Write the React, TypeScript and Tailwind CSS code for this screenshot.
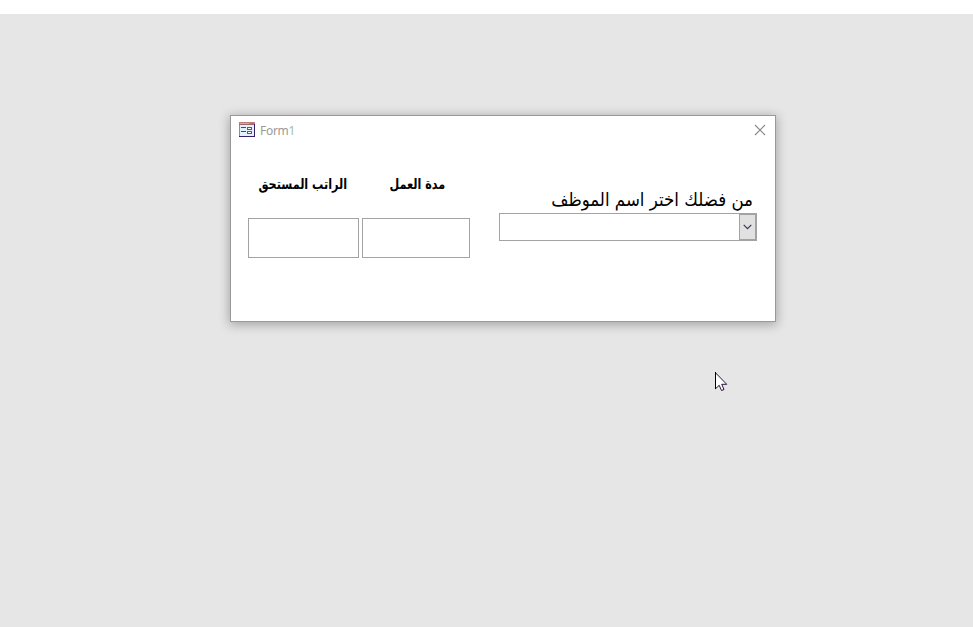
import { useState } from "react";

function FormIcon() {
  return (
    <svg className="mb-px" width="16" height="15" viewBox="0 0 16 15" shapeRendering="crispEdges">
      <rect width="16" height="15" fill="#8f88b0" />
      <rect x="1" y="3" width="14" height="11" fill="#e3f1f8" />
      <rect x="0" y="0" width="16" height="3" fill="#bd8078" />
      <rect x="1" y="1" width="9" height="1" fill="#d4aaa0" />
      <rect x="12" y="1" width="2" height="1" fill="#c96a48" />
      <rect x="0" y="2" width="16" height="1" fill="#a0686c" />
      <rect x="15" y="2" width="1" height="13" fill="#35206a" />
      <rect x="0" y="14" width="16" height="1" fill="#35206a" />
      <rect x="2" y="5" width="5" height="1" fill="#31517f" />
      <rect x="2" y="9" width="5" height="1" fill="#31517f" />
      <path d="M8.5 5.5h4v2h-4zM8.5 9.5h4v2h-4z" fill="#fff" stroke="#3c6794" />
    </svg>
  );
}

function Cursor() {
  return (
    <svg className="absolute left-[715px] top-[372px]" width="13" height="20" viewBox="0 0 13 20">
      <path d="M.5.8v15.9l3.7-3.4 2.3 5.2 2.5-1-2.3-5.2h5z" fill="#fff" stroke="#2c1238" />
      <path d="M.5 0v17" stroke="#000" />
    </svg>
  );
}

export default function App() {
  const [duration, setDuration] = useState("");
  const [salary, setSalary] = useState("");

  return (
    <div className="relative h-[627px] w-[973px] overflow-hidden bg-[#e6e6e6]">
      <div className="h-3.5 bg-white" />

      <div className="ml-[230px] mt-[101px] flex h-[207px] w-[546px] flex-col border border-[#999] bg-white shadow-[0_2px_10px_1px_rgba(0,0,0,0.28)]">
        <header className="flex h-7 items-center justify-between pl-2 pr-[9px]">
          <div className="flex items-center gap-[5px]">
            <FormIcon />
            <span className="pt-0.5 font-['Noto_Sans',sans-serif] text-xs leading-4 tracking-[-0.3px] text-[#999]">
              Form<span className="text-[#9fbf95]">1</span>
            </span>
          </div>
          <button aria-label="Close">
            <svg width="12" height="12" viewBox="0 0 12 12" fill="none" stroke="#888" strokeWidth="1.1">
              <path d="M1 1l10 10M11 1L1 11" />
            </svg>
          </button>
        </header>

        <main className="flex px-[17px] text-black">
          <div className="mt-7 flex gap-[3px]">
            <label className="flex w-[111px] flex-col items-center">
              <span dir="rtl" className="mr-[2px] h-[46px] scale-x-[0.89] whitespace-nowrap font-['DejaVu_Sans_Condensed','DejaVu_Sans',sans-serif] text-sm font-bold leading-6">
                الراتب المستحق
              </span>
              <input className="h-10 w-full border border-[#a3a3a3] px-1 outline-none" value={salary} onChange={(e) => setSalary(e.target.value)} />
            </label>
            <label className="flex w-[108px] flex-col items-center">
              <span dir="rtl" className="ml-[3px] h-[46px] scale-x-[0.89] whitespace-nowrap font-['DejaVu_Sans_Condensed','DejaVu_Sans',sans-serif] text-sm font-bold leading-6">
                مدة العمل
              </span>
              <input className="h-10 w-full border border-[#a3a3a3] px-1 outline-none" value={duration} onChange={(e) => setDuration(e.target.value)} />
            </label>
          </div>

          <div className="ml-[29px] mt-[41px] w-[258px]">
            <div dir="rtl" className="h-7 whitespace-nowrap pr-1 font-['DejaVu_Sans_Condensed','DejaVu_Sans',sans-serif] text-[18.5px] leading-[29px]">
              من فضلك اختر اسم الموظف
            </div>
            <div className="flex h-7 justify-end border border-[#a3a3a3]">
              <button aria-label="Open list" className="flex w-[17px] items-center justify-center border border-[#a3a3a3] bg-[#e1e1e1]">
                <svg width="9" height="6" viewBox="0 0 9 6" fill="none" stroke="#3b3654" strokeWidth="1.2">
                  <path d="M.7.8l3.8 3.8L8.3.8" />
                </svg>
              </button>
            </div>
          </div>
        </main>
      </div>

      <Cursor />
    </div>
  );
}
